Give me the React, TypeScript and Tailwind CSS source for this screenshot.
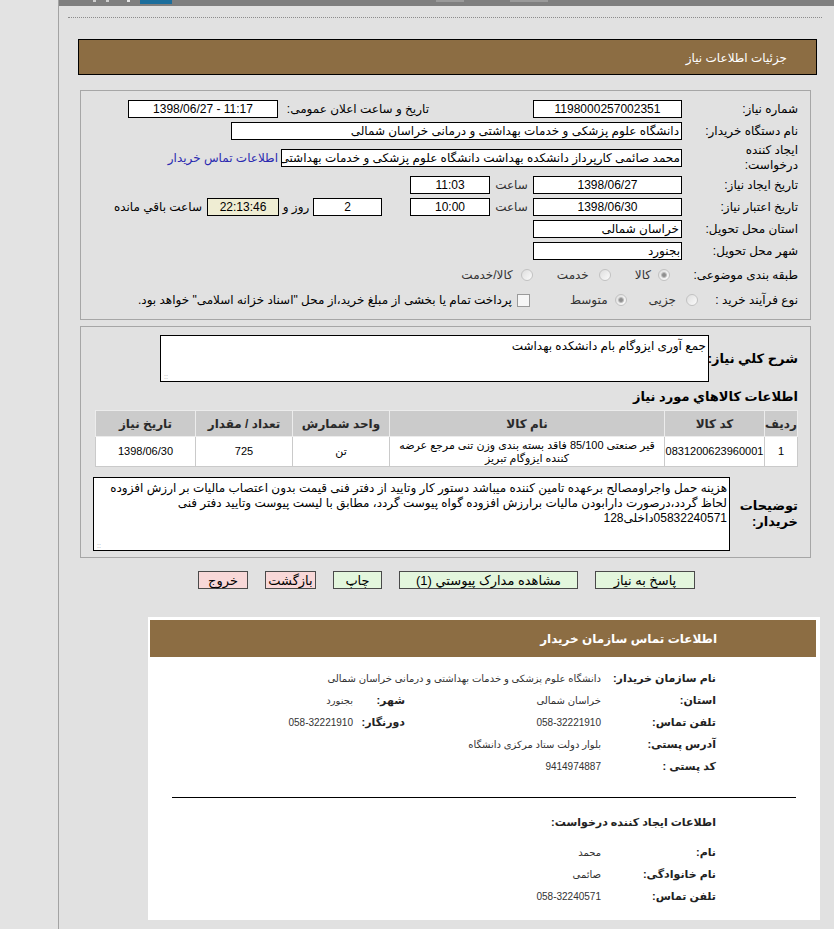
import React from 'react';

type BoxProps = { className?: string; children?: React.ReactNode; dir?: 'ltr' | 'rtl' };

function Box({ className = '', children, dir }: BoxProps) {
  return (
    <div
      dir={dir}
      className={`h-[18px] shrink-0 border border-black flex items-center text-[12px] leading-none ${className}`}
    >
      {children}
    </div>
  );
}

function Radio({ checked = false }: { checked?: boolean }) {
  return (
    <span className="w-[12px] h-[12px] shrink-0 rounded-full border border-[#c2c2c2] bg-gradient-to-br from-[#dedede] to-[#fbfbfb] flex items-center justify-center">
      {checked && <span className="w-[6px] h-[6px] rounded-full bg-[#8f8f8f] border border-[#bdbdbd]" />}
    </span>
  );
}

function Grip() {
  return <span className="absolute left-[3px] bottom-[1px] text-[7px] leading-none text-[#a0a0a0]">::</span>;
}

const items = [
  {
    row: '1',
    code: '0831200623960001',
    name: 'قیر صنعتی 85/100 فاقد بسته بندی وزن تنی مرجع عرضه کننده ایزوگام تبریز',
    unit: 'تن',
    qty: '725',
    date: '1398/06/30',
  },
];

export default function App() {
  return (
    <div className="w-[834px] h-[929px] overflow-hidden flex bg-[#e1e1e1] text-black font-['Liberation_Sans','DejaVu_Sans',sans-serif]">
      {/* left strip */}
      <div className="w-[59px] shrink-0 bg-[#e3e3e3] border-r border-[#a3a3a3]" />

      <div dir="rtl" className="flex-1 flex flex-col">
        {/* cut-off top bar */}
        <div className="h-[6px] bg-[#7f7f7f] relative">
          <div className="absolute left-[81px] top-0 w-[32px] h-[4px] bg-[#1c6e9c]" />
          <div className="absolute left-[34px] top-0 w-[3px] h-[2px] bg-[#cfcfcf]" />
          <div className="absolute left-[47px] top-0 w-[3px] h-[2px] bg-[#cfcfcf]" />
          <div className="absolute left-[68px] top-0 w-[3px] h-[2px] bg-[#e6e6e6]" />
          <div className="absolute left-[377px] top-0 w-[28px] h-[2px] bg-[#9a9a9a]" />
          <div className="absolute left-[451px] top-0 w-[38px] h-[2px] bg-[#9a9a9a]" />
        </div>

        <div className="mt-[11px] ml-[9px] mr-[12px] border-t border-dotted border-[#8c8c8c]" />

        {/* page title */}
        <div className="mt-[21px] ml-[19px] mr-[17px] h-[36px] border border-black bg-[#8c6d43] flex items-center pr-[29px] pt-[2px] text-white text-[12px]">
          جزئیات اطلاعات نیاز
        </div>

        {/* main info panel */}
        <div className="mt-[15px] ml-[21px] mr-[23px] border border-[#a6a6a6] pt-[7px] pb-[7px] pr-[12px] text-[12px]">
          <div className="h-[22px] flex items-center">
            <div className="w-[116px] shrink-0">شماره نیاز:</div>
            <Box className="w-[149px] justify-center bg-white">1198000257002351</Box>
            <div className="w-[104px] shrink-0" />
            <div className="w-[151px] shrink-0 whitespace-nowrap">تاریخ و ساعت اعلان عمومی:</div>
            <Box dir="ltr" className="w-[150px] justify-center bg-white">1398/06/27 - 11:17</Box>
          </div>

          <div className="h-[22px] flex items-center">
            <div className="w-[116px] shrink-0">نام دستگاه خریدار:</div>
            <Box className="w-[451px] bg-white pr-[2px] whitespace-nowrap overflow-hidden">
              دانشگاه علوم پزشکی و خدمات بهداشتی و درمانی خراسان شمالی
            </Box>
          </div>

          <div className="h-[32px] flex items-center">
            <div className="w-[116px] shrink-0 leading-[15px]">
              ایجاد کننده
              <br />
              درخواست:
            </div>
            <Box className="w-[401px] bg-white pr-[1px] whitespace-nowrap overflow-hidden">
              محمد صائمی کارپرداز دانشکده بهداشت دانشگاه علوم پزشکی و خدمات بهداشتی
            </Box>
            <span className="mr-[3px] whitespace-nowrap text-[#2a2ab0]">اطلاعات تماس خریدار</span>
          </div>

          <div className="h-[22px] flex items-center">
            <div className="w-[116px] shrink-0">تاریخ ایجاد نیاز:</div>
            <Box className="w-[149px] justify-center bg-white">1398/06/27</Box>
            <span className="w-[43px] shrink-0 text-center text-[#333]">ساعت</span>
            <Box className="w-[80px] justify-center bg-white">11:03</Box>
          </div>

          <div className="h-[22px] flex items-center">
            <div className="w-[116px] shrink-0">تاریخ اعتبار نیاز:</div>
            <Box className="w-[149px] justify-center bg-white">1398/06/30</Box>
            <span className="w-[43px] shrink-0 text-center text-[#333]">ساعت</span>
            <Box className="w-[80px] justify-center bg-white">10:00</Box>
            <div className="w-[28px] shrink-0" />
            <Box className="w-[69px] justify-center bg-white">2</Box>
            <span className="w-[34px] shrink-0 text-center">روز و</span>
            <Box className="w-[72px] justify-center bg-[#efedd3]">22:13:46</Box>
            <span className="mr-[5px] whitespace-nowrap">ساعت باقي مانده</span>
          </div>

          <div className="h-[22px] flex items-center">
            <div className="w-[116px] shrink-0">استان محل تحویل:</div>
            <Box className="w-[149px] bg-white pr-[2px]">خراسان شمالی</Box>
          </div>

          <div className="h-[22px] flex items-center">
            <div className="w-[116px] shrink-0">شهر محل تحویل:</div>
            <Box className="w-[149px] bg-white pr-[1px] text-[11px]">بجنورد</Box>
          </div>

          <div className="h-[26px] flex items-center">
            <div className="w-[116px] shrink-0">طبقه بندی موضوعی:</div>
            <div className="mr-[12px] flex items-center gap-[24px] text-[#333]">
              <label className="flex items-center gap-[7px]">
                <Radio checked />
                <span>کالا</span>
              </label>
              <label className="flex items-center gap-[10px]">
                <Radio />
                <span>خدمت</span>
              </label>
              <label className="flex items-center gap-[8px]">
                <Radio />
                <span>کالا/خدمت</span>
              </label>
            </div>
          </div>

          <div className="h-[24px] flex items-center">
            <div className="w-[100px] shrink-0 whitespace-nowrap">نوع فرآیند خرید :</div>
            <div className="flex items-center text-[#333]">
              <label className="flex items-center gap-[10px]">
                <Radio />
                <span>جزیی</span>
              </label>
              <label className="mr-[22px] flex items-center gap-[7px]">
                <Radio checked />
                <span>متوسط</span>
              </label>
              <label className="mr-[40px] flex items-center gap-[5px] text-black">
                <span className="w-[13px] h-[13px] shrink-0 border border-[#9a9a9a] bg-[#f6f6f6]" />
                <span className="whitespace-nowrap">
                  پرداخت تمام یا بخشی از مبلغ خرید،از محل "اسناد خزانه اسلامی" خواهد بود.
                </span>
              </label>
            </div>
          </div>
        </div>

        {/* description + items panel */}
        <div className="mt-[6px] ml-[21px] mr-[23px] border border-[#a6a6a6] pt-[8px] pb-[6px] pr-[12px]">
          <div className="flex items-center">
            <div className="w-[84px] shrink-0 whitespace-nowrap font-bold text-[13px]">شرح كلي نياز:</div>
            <div className="relative mr-[5px] w-[549px] h-[47px] border border-black bg-white pr-[2px] pt-[1px] text-[12px]">
              جمع آوری ایزوگام بام دانشکده بهداشت
              <Grip />
            </div>
          </div>

          <div className="mt-[7px] h-[16px] font-bold text-[13px] leading-[16px]">اطلاعات كالاهاي مورد نياز</div>

          <table className="mt-[5px] w-[703px] border-collapse border border-[#a9a9a9] bg-white text-[11px]">
            <thead>
              <tr className="h-[26px] bg-[#cbcbcb] text-[12px] font-bold text-[#2a2a2a]">
                <th className="w-[33px] border border-[#ececec] font-bold">ردیف</th>
                <th className="w-[100px] border border-[#ececec] font-bold">کد کالا</th>
                <th className="w-[275px] border border-[#ececec] font-bold">نام کالا</th>
                <th className="w-[97px] border border-[#ececec] font-bold">واحد شمارش</th>
                <th className="w-[97px] border border-[#ececec] font-bold">تعداد / مقدار</th>
                <th className="border border-[#ececec] font-bold">تاریخ نیاز</th>
              </tr>
            </thead>
            <tbody>
              {items.map((it) => (
                <tr key={it.code} className="h-[30px]">
                  <td className="border border-[#cacaca] text-center">{it.row}</td>
                  <td className="border border-[#cacaca] text-center">{it.code}</td>
                  <td className="border border-[#cacaca] text-center leading-[13px] px-[4px]">{it.name}</td>
                  <td className="border border-[#cacaca] text-center">{it.unit}</td>
                  <td className="border border-[#cacaca] text-center">{it.qty}</td>
                  <td className="border border-[#cacaca] text-center">{it.date}</td>
                </tr>
              ))}
            </tbody>
          </table>

          <div className="mt-[10px] flex items-center">
            <div className="w-[68px] shrink-0 font-bold text-[13px] leading-[16px]">
              توضیحات
              <br />
              خریدار:
            </div>
            <div className="relative w-[637px] h-[74px] border border-black bg-white pr-[2px] pt-[3px] text-[12px] leading-[15px] whitespace-nowrap overflow-hidden">
              هزینه حمل واجراومصالح برعهده تامین کننده میباشد دستور کار وتایید از دفتر فنی قیمت بدون اعتصاب مالیات بر ارزش افزوده
              <br />
              لحاظ گردد،درصورت دارابودن مالیات برارزش افزوده گواه پیوست گردد، مطابق با لیست پیوست  وتایید دفتر فنی
              <br />
              05832240571داخلی128
              <Grip />
            </div>
          </div>
        </div>

        {/* action buttons */}
        <div className="mt-[13px] flex justify-center gap-[17px] text-[13px]">
          <button className="w-[100px] h-[18px] border border-[#4a4a4a] bg-[#e3f6dd] leading-none">پاسخ به نیاز</button>
          <button className="w-[179px] h-[18px] border border-[#4a4a4a] bg-[#e3f6dd] leading-none">مشاهده مدارک پیوستي (1)</button>
          <button className="w-[49px] h-[18px] border border-[#4a4a4a] bg-[#e3f6dd] leading-none">چاپ</button>
          <button className="w-[51px] h-[18px] border border-[#4a4a4a] bg-[#f8d8d8] leading-none">بازگشت</button>
          <button className="w-[50px] h-[18px] border border-[#4a4a4a] bg-[#f8d8d8] leading-none">خروج</button>
        </div>

        {/* buyer contact card */}
        <div className="mt-[28px] ml-[89px] mr-[14px] bg-white pt-[3px] pl-[2px] pr-[4px] pb-[13px]">
          <div className="h-[37px] bg-[#8c6d43] flex items-center pr-[99px] text-white font-bold text-[12px]">
            اطلاعات تماس سازمان خریدار
          </div>

          <div className="mt-[10px] pr-[100px] text-[#222]">
            <div className="h-[22px] flex items-center">
              <div className="w-[115px] shrink-0 font-bold text-[11px]">نام سازمان خریدار:</div>
              <div className="text-[10px] text-[#333] whitespace-nowrap">دانشگاه علوم پزشکی و خدمات بهداشتی و درمانی خراسان شمالی</div>
            </div>
            <div className="h-[22px] flex items-center">
              <div className="w-[115px] shrink-0 font-bold text-[11px]">استان:</div>
              <div className="w-[196px] shrink-0 text-[10px] text-[#333]">خراسان شمالی</div>
              <div className="w-[52px] shrink-0 font-bold text-[11px]">شهر:</div>
              <div className="text-[10px] text-[#333]">بجنورد</div>
            </div>
            <div className="h-[22px] flex items-center">
              <div className="w-[115px] shrink-0 font-bold text-[11px]">تلفن تماس:</div>
              <div className="w-[196px] shrink-0 text-[10px] text-[#333]">058-32221910</div>
              <div className="w-[52px] shrink-0 font-bold text-[11px]">دورنگار:</div>
              <div className="text-[10px] text-[#333]">058-32221910</div>
            </div>
            <div className="h-[22px] flex items-center">
              <div className="w-[115px] shrink-0 font-bold text-[11px]">آدرس پستی:</div>
              <div className="text-[10px] text-[#333]">بلوار دولت ستاد مرکزی دانشگاه</div>
            </div>
            <div className="h-[22px] flex items-center">
              <div className="w-[115px] shrink-0 font-bold text-[11px]">کد پستی :</div>
              <div className="text-[10px] text-[#333]">9414974887</div>
            </div>
          </div>

          <div className="mt-[20px] ml-[22px] mr-[20px] border-t border-black" />

          <div className="mt-[15px] pr-[100px] h-[18px] flex items-center font-bold text-[11px] text-[#222]">
            اطلاعات ایجاد کننده درخواست:
          </div>

          <div className="mt-[10px] pr-[100px] text-[#222]">
            <div className="h-[22px] flex items-center">
              <div className="w-[115px] shrink-0 font-bold text-[11px]">نام:</div>
              <div className="text-[10px] text-[#333]">محمد</div>
            </div>
            <div className="h-[22px] flex items-center">
              <div className="w-[115px] shrink-0 font-bold text-[11px]">نام خانوادگی:</div>
              <div className="text-[10px] text-[#333]">صائمی</div>
            </div>
            <div className="h-[22px] flex items-center">
              <div className="w-[115px] shrink-0 font-bold text-[11px]">تلفن تماس:</div>
              <div className="text-[10px] text-[#333]">058-32240571</div>
            </div>
          </div>
        </div>
      </div>
    </div>
  );
}
